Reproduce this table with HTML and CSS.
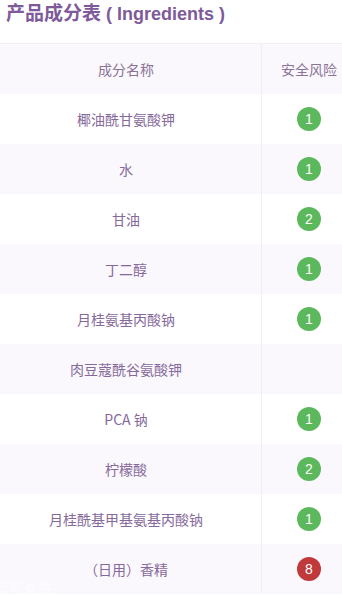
FILE: index.html
```html
<!DOCTYPE html>
<html lang="zh">
<head>
<meta charset="utf-8">
<link rel="stylesheet" href="styles.css">
</head>
<body>
<div class="page">
  <h2 class="title"><span class="cjk">产品成分表</span> ( Ingredients )</h2>
  <div class="table">
    <div class="row head"><div class="c name">成分名称</div><div class="c risk">安全风险</div></div>
    <div class="row"><div class="c name">椰油酰甘氨酸钾</div><div class="c risk"><span class="badge g">1</span></div></div>
    <div class="row alt"><div class="c name">水</div><div class="c risk"><span class="badge g">1</span></div></div>
    <div class="row"><div class="c name">甘油</div><div class="c risk"><span class="badge g">2</span></div></div>
    <div class="row alt"><div class="c name">丁二醇</div><div class="c risk"><span class="badge g">1</span></div></div>
    <div class="row"><div class="c name">月桂氨基丙酸钠</div><div class="c risk"><span class="badge g">1</span></div></div>
    <div class="row alt"><div class="c name">肉豆蔻酰谷氨酸钾</div><div class="c risk"></div></div>
    <div class="row"><div class="c name">PCA 钠</div><div class="c risk"><span class="badge g">1</span></div></div>
    <div class="row alt"><div class="c name">柠檬酸</div><div class="c risk"><span class="badge g">2</span></div></div>
    <div class="row"><div class="c name">月桂酰基甲基氨基丙酸钠</div><div class="c risk"><span class="badge g">1</span></div></div>
    <div class="row alt"><div class="c name">（日用）香精</div><div class="c risk"><span class="badge r">8</span></div></div>
  </div>
  <div class="wm">5号女性</div>
</div>
</body>
</html>
```
FILE: styles.css
```css
html, body { margin: 0; padding: 0; background: #fff; }
body { font-family: "Noto Sans CJK SC", "Liberation Sans", sans-serif; overflow: hidden; width: 342px; height: 597px; }
.page { position: relative; height: 597px; }
.title {
  margin: 0;
  padding: 2px 0 0 6px;
  height: 43px;
  box-sizing: border-box;
  font-size: 18px;
  line-height: 24px;
  font-weight: 700;
  color: #7e5a9b;
  font-family: "Liberation Sans", "Noto Sans CJK SC", sans-serif;
  white-space: nowrap;
}
.cjk { font-size: 19px; }
.table {
  margin-left: -9px;
  width: 365px;
  border-top: 1px solid #f2eff4;
}
.row { display: grid; grid-template-columns: 270px 95px; height: 50px; background: #fff; }
.row.alt, .row.head { background: #fbf8fd; }
.c {
  display: flex; align-items: center; justify-content: center;
  font-size: 14px; color: #86699b;
}
.head .c { color: #8a7396; }
.risk { border-left: 1px solid #f0edf3; }
.badge {
  width: 24px; height: 24px; border-radius: 50%;
  display: flex; align-items: center; justify-content: center;
  color: #fff; font-size: 14px;
  font-family: "Liberation Sans", sans-serif;
}
.badge.g { background: #5cb85c; }
.badge.r { background: #c0393b; }
.wm {
  position: absolute; left: 0; top: 579px;
  font-size: 14px; line-height: 16px; color: rgba(255,255,255,0.6);
  letter-spacing: 1px;
}
```
